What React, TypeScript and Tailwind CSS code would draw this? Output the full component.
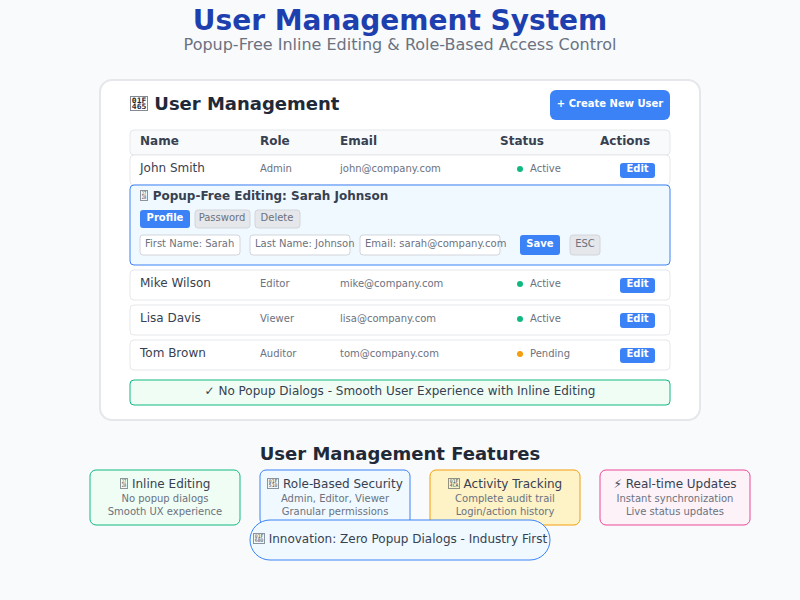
import React from "react";

type HexGlyphProps = {
  rows: [string, string];
  width: number;
  height: number;
  advance: number;
  size: number;
  bold?: boolean;
};

/* Boxed code point, shown where the font has no symbol of its own. */
function HexGlyph({ rows, width, height, advance, size, bold = false }: HexGlyphProps) {
  const inner = width - 3.5;
  return (
    <svg
      className={`inline-block shrink-0 overflow-visible align-baseline font-['DejaVu_Sans_Mono',monospace] ${bold ? "font-bold" : "font-normal"}`}
      width={advance}
      height={height - 1}
      fill="currentColor"
    >
      <rect x={0.5} y={0.5} width={width - 1} height={height - 1} fill="none" stroke="currentColor" strokeOpacity={0.55} />
      <text x={1.8} y={height / 2 - 0.5} fontSize={size} textLength={inner} lengthAdjust="spacingAndGlyphs">
        {rows[0]}
      </text>
      <text x={1.8} y={height - 1.8} fontSize={size} textLength={inner} lengthAdjust="spacingAndGlyphs">
        {rows[1]}
      </text>
    </svg>
  );
}

function SmallHex({ rows }: { rows: [string, string] }) {
  const wide = rows[0].length === 3;
  return <HexGlyph rows={rows} width={wide ? 12 : 8} height={11} advance={wide ? 12 : 8.5} size={5.2} />;
}

/* Hairline frame centred on the pixel grid lines, behind the box's content. */
const frame =
  "relative isolate border-2 border-transparent before:absolute before:-left-0.5 before:-top-0.5 before:-right-px before:-bottom-px before:-z-10 before:translate-x-[0.5px] before:translate-y-[0.5px] before:border before:content-['']";
const rowFrame = `${frame} before:rounded-[4.5px] before:border-[#e5e7eb]`;
const field = `${frame} before:rounded-[3.5px] before:border-[#d1d5db] before:bg-white`;
const grayButton = `${frame} before:rounded-[3.5px] before:border-[#d1d5db] before:bg-[#e5e7eb] flex justify-center`;

type User = { name: string; role: string; email: string; status: string; dot: string };

function UserRow({ user, className = "" }: { user: User; className?: string }) {
  return (
    <div
      className={`${rowFrame} before:bg-white grid h-8 grid-cols-[120px_80px_177px_103px_35px] items-start pl-[9px] ${className}`}
    >
      <span className="text-xs leading-6 text-[#374151]">{user.name}</span>
      <span className="leading-[25px]">{user.role}</span>
      <span className="leading-[25px]">{user.email}</span>
      <span className="flex gap-[7px] leading-[25px]">
        <i className={`mt-2.5 size-1.5 rounded-full ${user.dot}`} />
        {user.status}
      </span>
      <button className="mt-[7px] h-[15px] rounded-[3px] bg-[#3b82f6] pb-1 text-center font-bold leading-[11px] text-white">
        Edit
      </button>
    </div>
  );
}

const john: User = { name: "John Smith", role: "Admin", email: "john@company.com", status: "Active", dot: "bg-[#10b981]" };
const others: User[] = [
  { name: "Mike Wilson", role: "Editor", email: "mike@company.com", status: "Active", dot: "bg-[#10b981]" },
  { name: "Lisa Davis", role: "Viewer", email: "lisa@company.com", status: "Active", dot: "bg-[#10b981]" },
  { name: "Tom Brown", role: "Auditor", email: "tom@company.com", status: "Pending", dot: "bg-[#f59e0b]" },
];

function EditPanel() {
  return (
    <div className={`${frame} before:rounded-[4.5px] before:border-[#3b82f6] before:bg-[#f0f9ff] -mt-0.5 h-[82px] pl-2`}>
      <h3 className="pl-px text-xs font-bold leading-5 text-[#374151]">
        <SmallHex rows={["27", "28"]} /> Popup-Free Editing: Sarah Johnson
      </h3>
      <div className="mt-[3px] flex h-5 leading-[15px]">
        <button className="my-px ml-px flex h-[18px] w-[50px] justify-center rounded-[3px] bg-[#3b82f6] font-bold text-white">
          Profile
        </button>
        <button className={`${grayButton} ml-1 w-[57px] pr-px leading-[13px]`}>Password</button>
        <button className={`${grayButton} ml-[3px] w-[47px] pr-px leading-[13px]`}>Delete</button>
      </div>
      <div className="mt-[5px] flex h-[22px] whitespace-nowrap leading-[15px]">
        <div className={`${field} w-[102px] pl-1`}>First Name: Sarah</div>
        <div className={`${field} ml-2 w-[102px] pl-1`}>Last Name: Johnson</div>
        <div className={`${field} ml-2 w-[142px] pl-1`}>Email: sarah@company.com</div>
        <button className="my-px ml-[19px] flex w-10 justify-center rounded-[3px] bg-[#3b82f6] pt-px font-bold text-white">
          Save
        </button>
        <button className={`${grayButton} ml-[9px] w-8`}>ESC</button>
      </div>
    </div>
  );
}

type Feature = { icon: React.ReactNode; title: string; lines: [string, string]; tone: string };

const features: Feature[] = [
  {
    icon: <SmallHex rows={["27", "28"]} />,
    title: "Inline Editing",
    lines: ["No popup dialogs", "Smooth UX experience"],
    tone: "before:border-[#10b981] before:bg-[#f0fdf4]",
  },
  {
    icon: <SmallHex rows={["01F", "510"]} />,
    title: "Role-Based Security",
    lines: ["Admin, Editor, Viewer", "Granular permissions"],
    tone: "before:border-[#3b82f6] before:bg-[#f0f9ff]",
  },
  {
    icon: <SmallHex rows={["01F", "4CA"]} />,
    title: "Activity Tracking",
    lines: ["Complete audit trail", "Login/action history"],
    tone: "before:border-[#f59e0b] before:bg-[#fef3c7]",
  },
  {
    icon: "⚡",
    title: "Real-time Updates",
    lines: ["Instant synchronization", "Live status updates"],
    tone: "before:border-[#ec4899] before:bg-[#fdf2f8]",
  },
];

export default function App() {
  return (
    <div className="h-[600px] w-[800px] overflow-hidden bg-[#f8fafc] font-['DejaVu_Sans',sans-serif] text-[10px] text-[#6b7280]">
      <header className="pt-1 text-center">
        <h1 className="text-[28px] font-bold leading-[33px] text-[#1e40af]">User Management System</h1>
        <p className="-mt-0.5 text-base leading-[19px]">Popup-Free Inline Editing &amp; Role-Based Access Control</p>
      </header>

      <main className="mx-auto mt-[25px] h-[342px] w-[602px] rounded-[13px] border-2 border-[#e5e7eb] bg-white px-7">
        <div className="flex h-12 justify-between px-px">
          <h2 className="mt-3 text-lg font-bold leading-[21px] text-[#1f2937]">
            <HexGlyph rows={["01F", "465"]} width={18} height={15} advance={18} size={7.4} bold /> User Management
          </h2>
          <button className="mt-[9px] flex h-[30px] w-[120px] justify-center rounded-md bg-[#3b82f6] font-bold leading-[27px] text-white">
            + Create New User
          </button>
        </div>

        <div
          className={`${rowFrame} before:bg-[#f9fafb] grid h-[27px] grid-cols-[120px_80px_160px_100px_auto] pl-[9px] text-xs font-bold leading-5 text-[#374151]`}
        >
          <span>Name</span>
          <span>Role</span>
          <span>Email</span>
          <span>Status</span>
          <span>Actions</span>
        </div>
        <UserRow user={john} className="-mt-0.5" />
        <EditPanel />
        <div className="mt-[3px] flex flex-col gap-[3px]">
          {others.map((user) => (
            <UserRow key={user.name} user={user} />
          ))}
        </div>
        <div
          className={`${frame} before:rounded-[4.5px] before:border-[#10b981] before:bg-[#f0fdf4] mt-2 h-[27px] text-center text-xs leading-5 text-[#374151]`}
        >
          ✓ No Popup Dialogs - Smooth User Experience with Inline Editing
        </div>
      </main>

      <section>
        <h2 className="mt-[22px] text-center text-lg font-bold leading-[21px] text-[#1f2937]">User Management Features</h2>
        <div className="mt-[5px] flex gap-[18px] pl-[89px]">
          {features.map((feature) => (
            <article
              key={feature.title}
              className={`${frame} before:rounded-[6.5px] h-[57px] w-[152px] shrink-0 whitespace-nowrap text-center ${feature.tone}`}
            >
              <h3 className="mt-[3px] text-xs leading-5 text-[#374151]">
                {feature.icon} {feature.title}
              </h3>
              <p className="-mt-0.5 leading-[13px]">{feature.lines[0]}</p>
              <p className="leading-[13px]">{feature.lines[1]}</p>
            </article>
          ))}
        </div>
        <div
          className={`${frame} before:rounded-[20.5px] before:border-[#3b82f6] before:bg-[#f0f9ff] mx-auto -mt-[7px] flex h-[42px] w-[302px] justify-center whitespace-nowrap text-xs leading-9 text-[#374151]`}
        >
          <span>
            <SmallHex rows={["01F", "680"]} /> Innovation: Zero Popup Dialogs - Industry First
          </span>
        </div>
      </section>
    </div>
  );
}
